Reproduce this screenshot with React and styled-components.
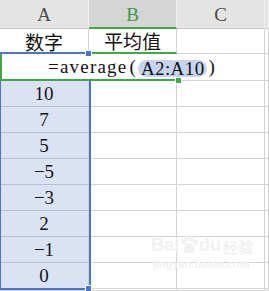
import React from 'react';
import styled, { createGlobalStyle } from 'styled-components';

const GlobalStyle = createGlobalStyle`
  html, body {
    margin: 0;
    padding: 0;
    background: #ffffff;
  }
`;

const BLUE = '#4a74cd';
const GREEN = '#3ea848';
const GRID = '#d4d4d4';

let Sheet = styled.div`
  position: relative;
  width: 269px;
  height: 291px;
  overflow: hidden;
  display: grid;
  grid-template-columns: 89px 88px 88px 1fr;
  grid-template-rows: 29px 25px 27px repeat(8, 26px) 1fr;
  font-family: 'Liberation Serif', 'Noto Sans CJK SC', serif;
  font-size: 19px;
  color: #161616;
`;

let ColHead = styled.div`
  box-sizing: border-box;
  display: flex;
  align-items: center;
  justify-content: center;
  background: ${p => (p.active ? '#d5d5d5' : '#e4e4e4')};
  color: ${p => (p.active ? '#3a9a46' : '#4a4a4a')};
  border-right: 1px solid #f2f2f2;
  border-bottom: ${p => (p.active ? `2px solid ${GREEN}` : '1px solid #c9c9c9')};
  padding-top: ${p => (p.active ? '2px' : '1px')};
`;

let Cell = styled.div`
  box-sizing: border-box;
  display: flex;
  align-items: center;
  justify-content: center;
  background: ${p => (p.selected ? '#dbe2f4' : '#ffffff')};
  border-right: 1px solid ${GRID};
  border-bottom: ${p =>
    p.activeEdge
      ? `2px solid ${GREEN}`
      : `1px solid ${p.selected ? '#b8bfd4' : GRID}`};
`;

let CjkText = styled.span`
  font-family: 'Noto Sans CJK SC', sans-serif;
  font-size: 19px;
  line-height: 1;
  color: #111;
`;

let Selection = styled.div`
  position: absolute;
  left: 0;
  top: 52px;
  width: 91px;
  height: 238px;
  box-sizing: border-box;
  border: 2px solid ${BLUE};
  border-left-width: 1px;
  pointer-events: none;
  z-index: 1;
`;

let Handle = styled.div`
  position: absolute;
  width: 5px;
  height: 5px;
  background: ${p => p.color};
  border: 1px solid #ffffff;
  z-index: 3;
`;

let Editor = styled.div`
  position: absolute;
  left: 0;
  top: 54px;
  width: 177px;
  height: 27px;
  box-sizing: border-box;
  background: #ffffff;
  border-left: 2px solid ${GREEN};
  border-bottom: 2px solid ${GREEN};
  display: flex;
  align-items: center;
  padding-left: 46px;
  white-space: nowrap;
  overflow: visible;
  z-index: 2;
  font-family: 'Liberation Serif', serif;
  font-size: 19px;
  letter-spacing: 1.2px;
  color: #111;
`;

let Paren = styled.span`
  margin: 0 1px 0 2px;
`;

let RefPill = styled.span`
  display: inline-flex;
  align-items: center;
  height: 17px;
  margin-top: 3px;
  background: #c6d4ef;
  border-radius: 9px;
  padding: 0 2px 0 3px;
  letter-spacing: 0.4px;
  line-height: 17px;
`;

let Caret = styled.span`
  display: inline-block;
  width: 1px;
  height: 25px;
  background: #111;
  margin-left: 3px;
`;

let Watermark = styled.div`
  position: absolute;
  left: 151px;
  top: 236px;
  display: flex;
  flex-direction: column;
  align-items: flex-start;
  color: #f1f1f1;
  pointer-events: none;
  z-index: 0;
`;

let MarkLine = styled.div`
  display: flex;
  align-items: flex-end;
  font-family: 'Liberation Sans', sans-serif;
  font-weight: bold;
  font-size: 18px;
  line-height: 1;
`;

let MarkCjk = styled.span`
  font-family: 'Noto Sans CJK SC', sans-serif;
  font-size: 15px;
  font-weight: bold;
  margin-left: 2px;
`;

let MarkUrl = styled.div`
  font-family: 'Liberation Sans', sans-serif;
  font-size: 11px;
  font-weight: bold;
  margin-top: 4px;
  margin-left: 2px;
`;

const Paw = () => (
  <svg width="20" height="18" viewBox="0 0 22 20">
    <g fill="#f1f1f1">
      <ellipse cx="5" cy="6" rx="2.4" ry="3" />
      <ellipse cx="9" cy="3" rx="2.4" ry="3" />
      <ellipse cx="14" cy="3" rx="2.4" ry="3" />
      <ellipse cx="18" cy="7" rx="2.4" ry="3" />
      <path d="M11 8 C7 8 5 13 5 16 C5 19 9 19 11 18 C13 19 17 19 17 16 C17 13 15 8 11 8 Z" />
    </g>
  </svg>
);

const values = ['10', '7', '5', '−5', '−3', '2', '−1', '0'];

export default function App() {
  return (
    <>
      <GlobalStyle />
      <Sheet>
        <ColHead>A</ColHead>
        <ColHead active>B</ColHead>
        <ColHead>C</ColHead>
        <ColHead />

        <Cell><CjkText>数字</CjkText></Cell>
        <Cell activeEdge><CjkText>平均值</CjkText></Cell>
        <Cell />
        <Cell />

        <Cell />
        <Cell />
        <Cell />
        <Cell />

        {values.map((v, i) => (
          <React.Fragment key={i}>
            <Cell selected>{v}</Cell>
            <Cell />
            <Cell />
            <Cell />
          </React.Fragment>
        ))}

        <Cell />
        <Cell />
        <Cell />
        <Cell />

        <Selection />
        <Handle color={BLUE} style={{ left: 85, top: 50 }} />
        <Handle color={BLUE} style={{ left: 85, top: 285 }} />

        <Editor>
          =average<Paren>(</Paren>
          <RefPill>A2:A10</RefPill>
          <Paren>)</Paren>
          <Caret />
        </Editor>
        <Handle color={GREEN} style={{ left: 175, top: 77 }} />

        <Watermark>
          <MarkLine>
            Bai
            <Paw />
            du
            <MarkCjk>经验</MarkCjk>
          </MarkLine>
          <MarkUrl>jingyan.baidu.com</MarkUrl>
        </Watermark>
      </Sheet>
    </>
  );
}
